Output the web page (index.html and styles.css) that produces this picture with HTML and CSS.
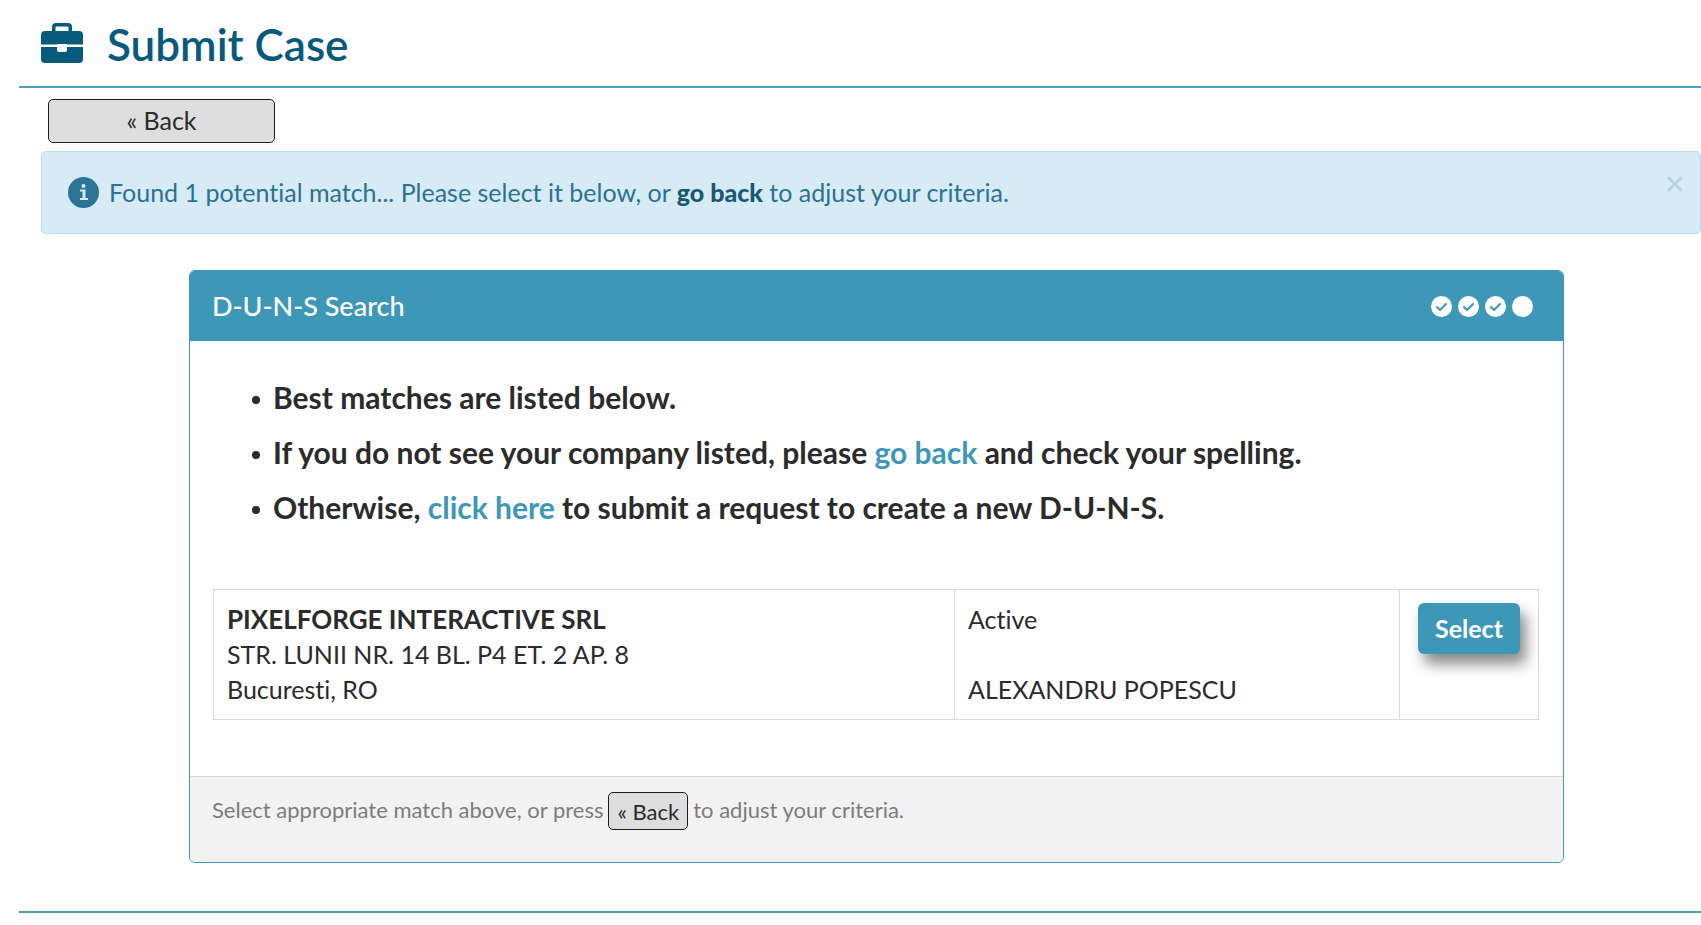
FILE: index.html
```
<!DOCTYPE html>
<html lang="en">
<head>
    <meta charset="UTF-8">
    <meta name="viewport" content="width=device-width, initial-scale=1.0">
    <title>Submit Case</title>
    <link rel="stylesheet" href="styles.css">
</head>
<body>
    <!-- Page title -->
    <header class="page-header">
        <svg class="briefcase" viewBox="0 0 42 40" aria-hidden="true">
            <path fill="currentColor" fill-rule="evenodd" d="M15 0h12a4 4 0 0 1 4 4v4h7a4 4 0 0 1 4 4v9.500H0V12a4 4 0 0 1 4-4h7V4a4 4 0 0 1 4-4zm.5 3.500a1 1 0 0 0-1 1V8h13V4.500a1 1 0 0 0-1-1z"/>
            <path fill="currentColor" d="M0 24h42v12a4 4 0 0 1-4 4H4a4 4 0 0 1-4-4z"/>
            <path fill="#fefefe" d="M16 21h10v6a2 2 0 0 1-2 2h-6a2 2 0 0 1-2-2z"/>
        </svg>
        <h1>Submit Case</h1>
    </header>

    <main class="content">
        <button class="btn-back" type="button">« Back</button>

        <div class="alert" role="status">
            <svg class="alert-icon" viewBox="0 0 31 31" aria-hidden="true">
                <circle cx="15.500" cy="15.500" r="15.500" fill="currentColor"/>
                <circle cx="15.500" cy="9" r="2" fill="#d7ebf5"/>
                <path fill="#d7ebf5" d="M12 12.500h5.500v8.500H20v2h-8v-2h2.500v-6.500H12z"/>
            </svg>
            <p>Found 1 potential match... Please select it below, or <a href="#">go back</a> to adjust your criteria.</p>
            <button class="close-button" type="button" aria-label="Close">
                <svg viewBox="0 0 16 16" aria-hidden="true"><path d="M2 2l12 12M14 2L2 14"/></svg>
            </button>
        </div>

        <section class="panel">
            <div class="panel-heading">
                <h2>D-U-N-S Search</h2>
                <div class="steps">
                    <span class="step"><svg viewBox="0 0 21 21"><path d="M6 11l3 3 6-6"/></svg></span>
                    <span class="step"><svg viewBox="0 0 21 21"><path d="M6 11l3 3 6-6"/></svg></span>
                    <span class="step"><svg viewBox="0 0 21 21"><path d="M6 11l3 3 6-6"/></svg></span>
                    <span class="step"></span>
                </div>
            </div>

            <div class="panel-body">
                <ul class="hints">
                    <li>Best matches are listed below.</li>
                    <li>If you do not see your company listed, please <a href="#">go back</a> and check your spelling.</li>
                    <li>Otherwise, <a href="#">click here</a> to submit a request to create a new D-U-N-S.</li>
                </ul>

                <table class="matches">
                    <tr>
                        <td class="company">
                            <strong>PIXELFORGE INTERACTIVE SRL</strong><br>
                            STR. LUNII NR. 14 BL. P4 ET. 2 AP. 8<br>
                            Bucuresti, RO
                        </td>
                        <td class="status">
                            Active<br>
                            <br>
                            ALEXANDRU POPESCU
                        </td>
                        <td class="action"><button class="btn-select" type="button">Select</button></td>
                    </tr>
                </table>
            </div>

            <div class="panel-footer">
                <span>Select appropriate match above, or press</span>
                <button class="btn-small" type="button">« Back</button>
                <span>to adjust your criteria.</span>
            </div>
        </section>
    </main>

    <hr class="divider">
</body>
</html>
```

FILE: styles.css
```
* {
    box-sizing: border-box;
}

body {
    font-family: Lato, "Liberation Sans", sans-serif;
    font-size: 25px;
    line-height: 35px;
    font-variant-ligatures: none;
    margin: 0;
    padding: 0 0 0 19px;
    background-color: #fefefe;
    color: #2b2b2b;
}

h1, h2, p, ul {
    margin: 0;
}

button {
    font-family: inherit;
    cursor: pointer;
}

a {
    text-decoration: none;
}

.page-header {
    display: flex;
    align-items: center;
    gap: 24px;
    height: 88px;
    padding-left: 22px;
    border-bottom: 2px solid #4a9fbc;
    color: #075a7c;
}

.page-header h1 {
    font-size: 44px;
    line-height: 52px;
    font-weight: 600;
    padding-top: 2px;
}

.briefcase {
    width: 42px;
    height: 40px;
}

.content {
    padding: 11px 0 0 22px;
}

.btn-back {
    display: block;
    width: 227px;
    height: 44px;
    margin: 0 0 8px 7px;
    padding: 0 0 2px;
    border: 1px solid #1c1c1c;
    border-radius: 5px;
    background-color: #dedede;
    color: #2b2b2b;
    font-size: 25px;
}

/* Info alert */
.alert {
    display: flex;
    align-items: center;
    height: 83px;
    padding: 0 17px 0 26px;
    border: 1px solid #b5dde8;
    border-radius: 5px;
    background-color: #d7ebf5;
    color: #2b7193;
}

.alert-icon {
    width: 31px;
    height: 31px;
    margin-right: 10px;
    color: #2b7496;
}

.alert a {
    color: #1a5872;
    font-weight: 900;
}

.close-button {
    align-self: flex-start;
    display: flex;
    margin: 24px 0 0 auto;
    padding: 0;
    border: none;
    background: none;
}

.close-button svg {
    width: 16px;
    height: 16px;
    fill: none;
    stroke: #b9d3df;
    stroke-width: 3;
    stroke-linecap: round;
}

/* Search panel */
.panel {
    margin: 36px 137px 48px 148px;
    border: 1px solid #3d97b7;
    border-radius: 6px;
    background-color: #fefefe;
    overflow: hidden;
}

.panel-heading {
    display: flex;
    align-items: center;
    justify-content: space-between;
    height: 70px;
    padding: 0 30px 0 22px;
    background-color: #3d97b7;
    color: #fff;
}

.panel-heading h2 {
    font-size: 27px;
    line-height: 36px;
    font-weight: 500;
}

.steps {
    display: flex;
    gap: 6px;
}

.step {
    width: 21px;
    height: 21px;
    border-radius: 50%;
    background-color: #fff;
}

.step svg {
    display: block;
    fill: none;
    stroke: #3d97b7;
    stroke-width: 2;
    stroke-linecap: round;
    stroke-linejoin: round;
}

.panel-body {
    padding: 36px 24px 56px 23px;
}

.hints {
    margin-bottom: 62px;
    padding-left: 60px;
    font-size: 30px;
    line-height: 40px;
    font-weight: bold;
    list-style: none;
}

.hints li::before {
    content: "";
    display: inline-block;
    width: 8px;
    height: 8px;
    margin: 0 13px 0 -21px;
    border-radius: 50%;
    background-color: #2b2b2b;
    vertical-align: 5px;
}

.hints li + li {
    margin-top: 15px;
}

.hints a {
    color: #3d97b7;
}

.matches {
    width: 100%;
    border-collapse: collapse;
    table-layout: fixed;
}

.matches td {
    padding: 12px 13px;
    border: 1px solid #d9d9d9;
    vertical-align: top;
}

.matches .status {
    width: 445px;
}

.matches .action {
    width: 139px;
    padding: 13px 18px;
}

.matches strong {
    font-size: 26px;
}

.btn-select {
    width: 102px;
    height: 51px;
    padding: 0 0 2px;
    border: none;
    border-radius: 6px;
    background-color: #3d97b7;
    box-shadow: 6px 10px 14px rgba(0, 0, 0, 0.45);
    color: #fff;
    font-size: 25px;
    font-weight: bold;
}

.panel-footer {
    display: flex;
    align-items: flex-start;
    gap: 5px;
    padding: 15px 22px 32px;
    border-top: 1px solid #d9d9d9;
    background-color: #f2f2f2;
    color: #7c7c7c;
    font-size: 22px;
}

.btn-small {
    height: 38px;
    padding: 0 8px;
    border: 1px solid #1c1c1c;
    border-radius: 5px;
    background-color: #dedede;
    color: #2b2b2b;
    font-size: 22px;
}

.divider {
    margin: 0;
    border: none;
    border-top: 2px solid #4a9fbc;
}
```
